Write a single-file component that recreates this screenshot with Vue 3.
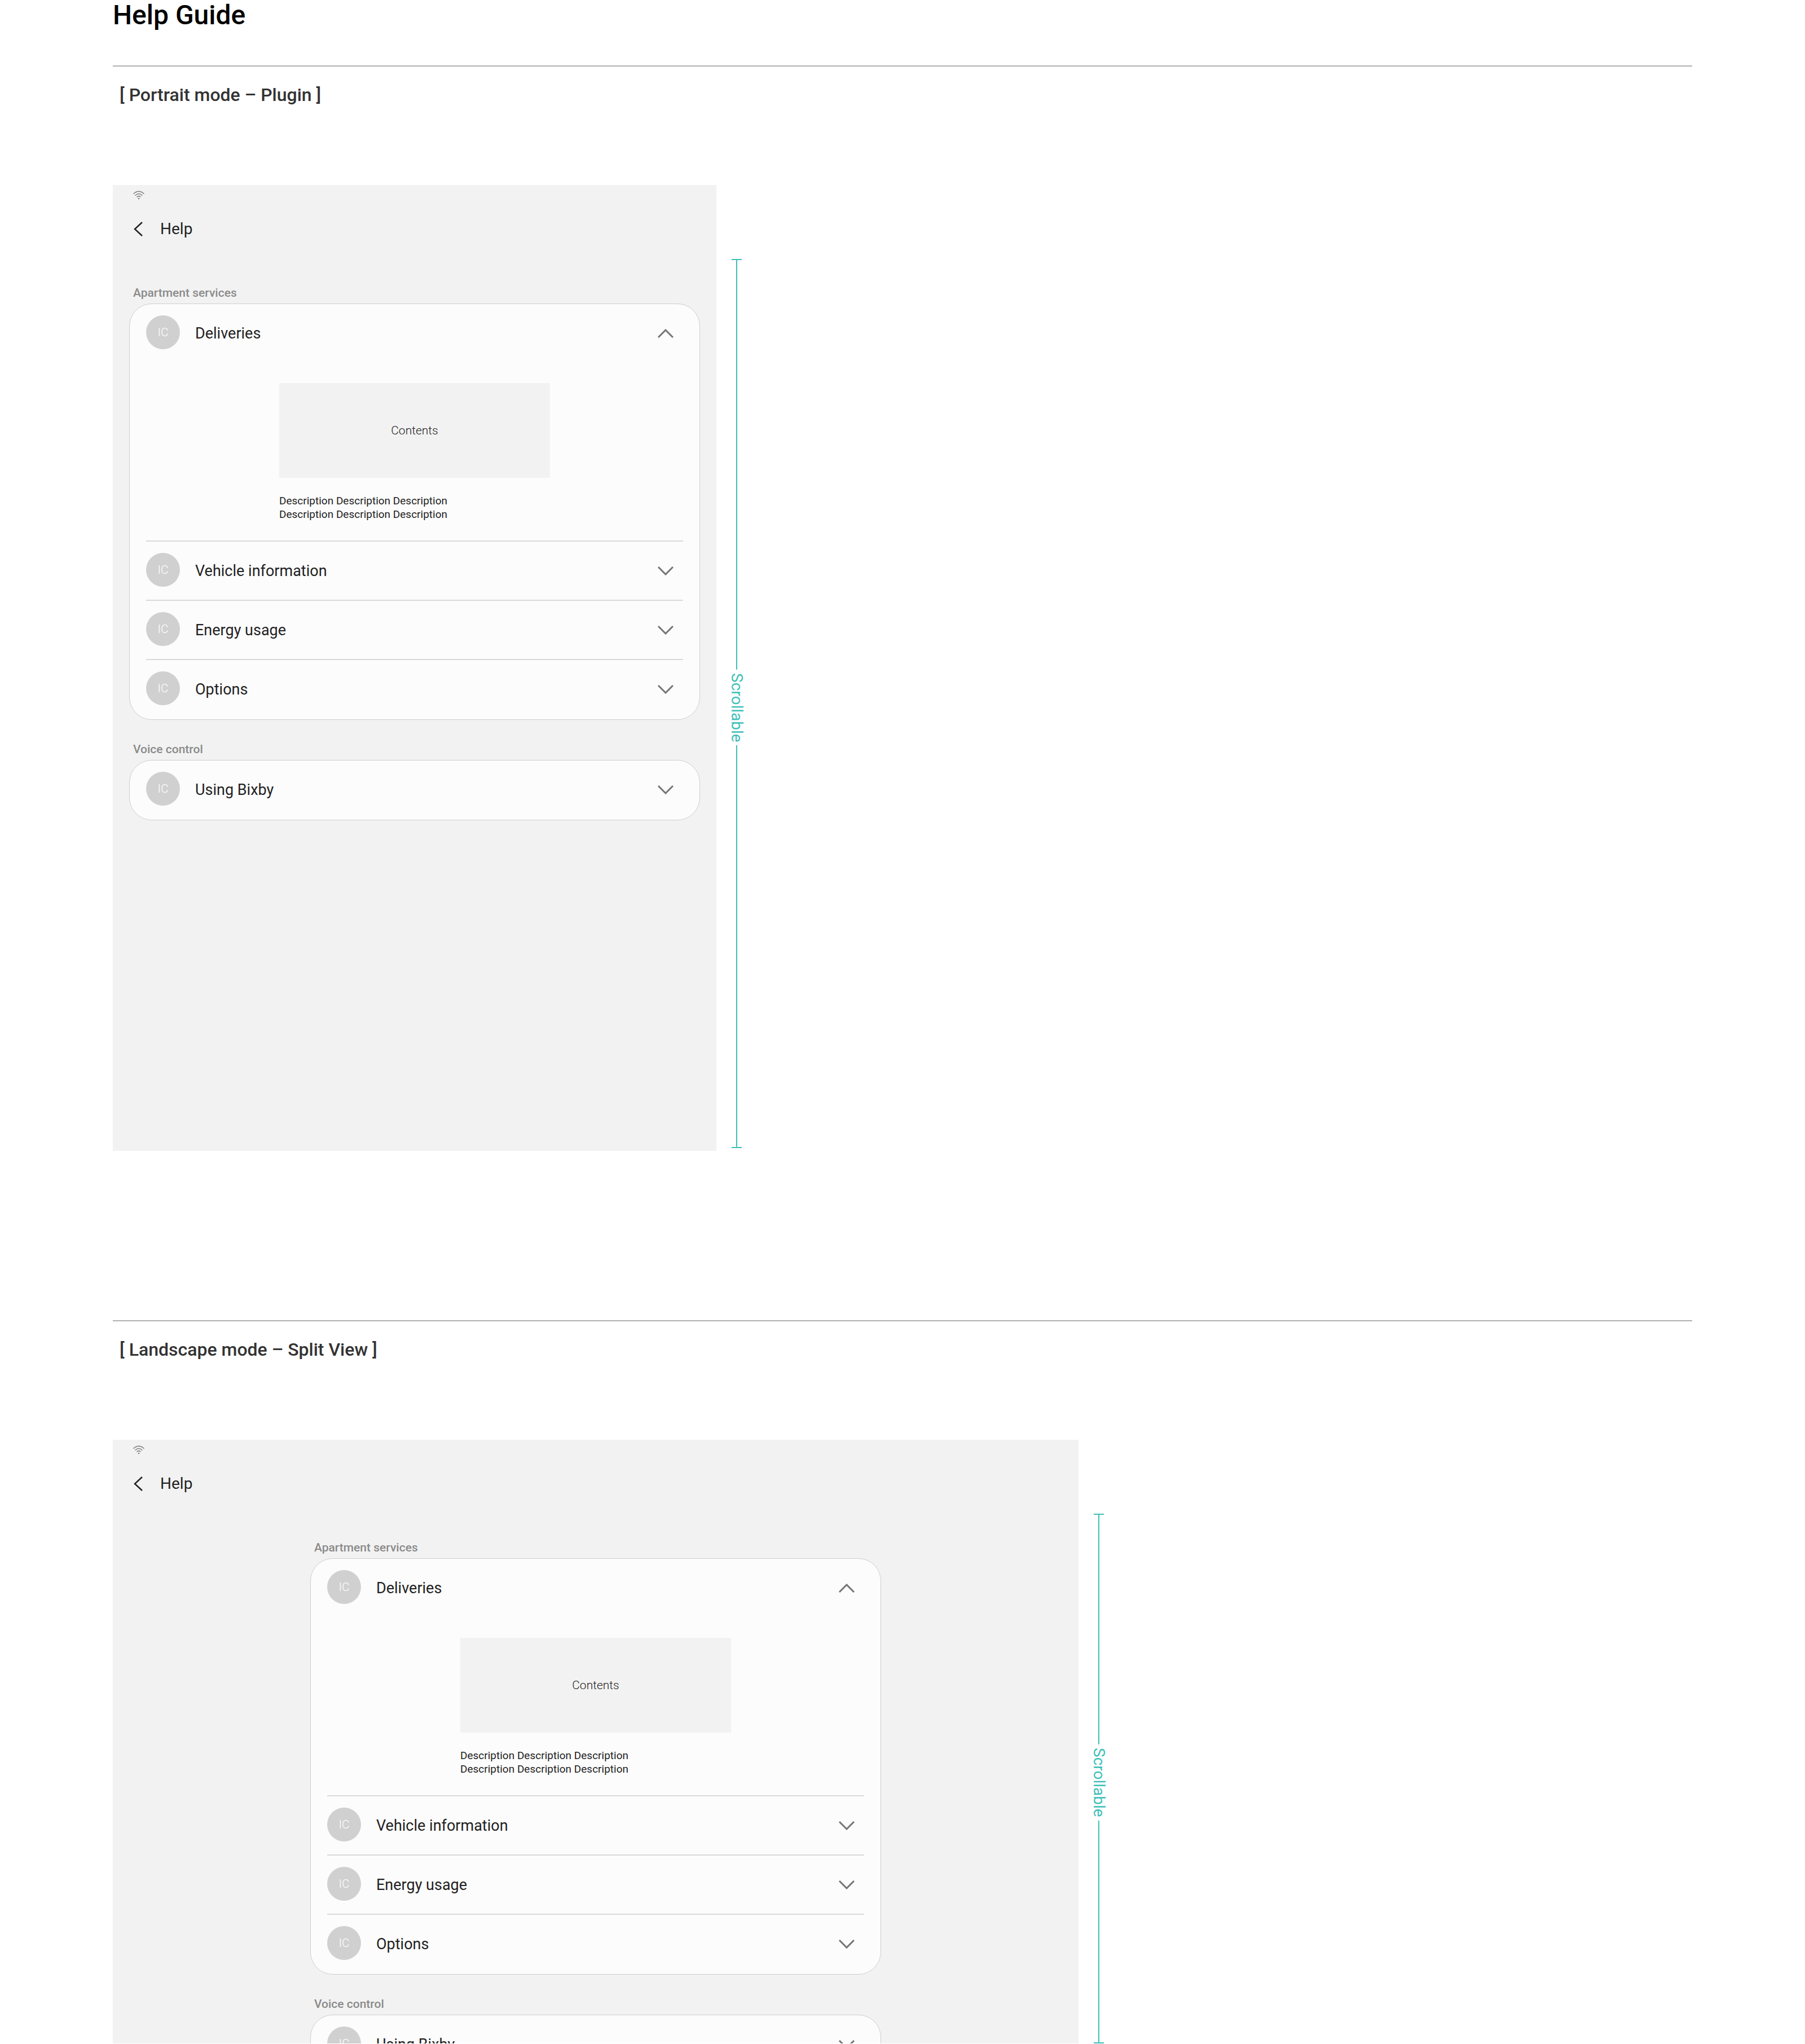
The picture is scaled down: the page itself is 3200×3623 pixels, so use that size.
<script setup>
import { reactive } from 'vue'

const makeSections = () => [
  {
    title: 'Apartment services',
    items: [
      { name: 'Deliveries', open: true },
      { name: 'Vehicle information', open: false },
      { name: 'Energy usage', open: false },
      { name: 'Options', open: false },
    ],
  },
  { title: 'Voice control', items: [{ name: 'Using Bixby', open: false }] },
]

const modes = reactive([
  { id: 'portrait', heading: '[ Portrait mode – Plugin ]', sections: makeSections() },
  { id: 'landscape', heading: '[ Landscape mode – Split View ]', sections: makeSections() },
])
</script>

<template>
  <main class="page">
    <h1 class="page-title">Help Guide</h1>

    <section v-for="mode in modes" :key="mode.id" class="mode" :class="mode.id">
      <h2 class="mode-title">{{ mode.heading }}</h2>

      <div class="stage">
        <div class="screen">
          <div class="status">
            <svg class="wifi" viewBox="0 0 20 16" aria-hidden="true">
              <g fill="none" stroke="#7c7c7c" stroke-width="1.5" stroke-linecap="round">
                <path d="M1 5.2Q10-2.8 19 5.2" />
                <path d="M4 8.2Q10 2.8 16 8.2" />
                <path d="M6.900 11Q10 8.2 13.100 11" />
              </g>
              <circle cx="10" cy="14" r="1.3" fill="#7c7c7c" />
            </svg>
          </div>

          <header class="app-bar">
            <button class="back" type="button" aria-label="Back">
              <svg viewBox="0 0 16 26" aria-hidden="true">
                <path d="M15 1 2 13 15 25" fill="none" stroke="#222" stroke-width="2.500" />
              </svg>
            </button>
            <span class="app-title">Help</span>
          </header>

          <div class="sections">
            <div v-for="section in mode.sections" :key="section.title" class="section">
              <h3 class="section-title">{{ section.title }}</h3>
              <ul class="card">
                <li v-for="item in section.items" :key="item.name" class="item">
                  <button
                    class="row"
                    type="button"
                    :aria-expanded="item.open"
                    @click="item.open = !item.open"
                  >
                    <span class="badge" aria-hidden="true">IC</span>
                    <span class="row-name">{{ item.name }}</span>
                    <svg class="chevron" :class="{ up: item.open }" viewBox="0 0 28 16" aria-hidden="true">
                      <path d="M1 1 14 14 27 1" fill="none" stroke="#757575" stroke-width="3" />
                    </svg>
                  </button>
                  <div v-if="item.open" class="detail">
                    <div class="contents">Contents</div>
                    <p class="description">
                      Description Description Description<br />
                      Description Description Description
                    </p>
                  </div>
                </li>
              </ul>
            </div>
          </div>
        </div>

        <div class="ruler">
          <span class="line line-top"></span>
          <span class="ruler-label">Scrollable</span>
          <span class="line line-bottom"></span>
        </div>
      </div>
    </section>
  </main>
</template>

<style>
body {
  margin: 0;
  background: #fff;
}
</style>

<style scoped>
.page {
  padding: 0 200px;
  overflow: hidden;
  font-family: Roboto, 'Noto Sans', sans-serif;
  color: #222;
}

h1,
h2,
h3,
p,
ul {
  margin: 0;
  padding: 0;
}

h1,
h2,
h3 {
  font-weight: 500;
}

button {
  padding: 0;
  border: 0;
  background: none;
  color: inherit;
  font: inherit;
  cursor: pointer;
}

svg {
  display: block;
}

.page-title {
  height: 116px;
  font-size: 48px;
  line-height: 54px;
  color: #000;
}

.mode {
  border-top: 2px solid #b0b0b0;
}

.portrait {
  padding-bottom: 300px;
}

.mode-title {
  padding: 30px 12px 140px;
  font-size: 32px;
  line-height: 40px;
  color: #333;
}

.stage {
  display: flex;
  gap: 27px;
}

.screen {
  box-sizing: border-box;
  width: 100%;
  overflow: hidden;
  background: #f2f2f2;
}

.portrait .screen {
  max-width: 1070px;
  aspect-ratio: 1070 / 1712;
}

.landscape .screen {
  max-width: 1712px;
  aspect-ratio: 1712 / 1070;
}

.status {
  padding: 10px 36px 0;
}

.wifi {
  width: 20px;
  height: 16px;
}

.app-bar {
  display: flex;
  align-items: center;
  gap: 31px;
  padding: 32px 37px 0;
}

.back svg {
  width: 16px;
  height: 26px;
}

.app-title {
  font-size: 28px;
  line-height: 40px;
}

.sections {
  max-width: 1012px;
  margin: 0 auto;
  padding-top: 67px;
}

.section-title {
  padding: 12px 7px 5px;
  font-size: 21px;
  line-height: 28px;
  color: #8a8a8a;
}

.section + .section {
  padding-top: 26px;
}

.card {
  list-style: none;
  padding: 0 29px 2px;
  border: 1px solid #cfcfcf;
  border-radius: 40px;
  background: #fcfcfc;
}

.item + .item {
  border-top: 2px solid #d9d9d9;
}

.row {
  display: flex;
  align-items: center;
  width: 100%;
  height: 103px;
  text-align: left;
}

.badge {
  width: 60px;
  margin: 0 27px 3px 0;
  border-radius: 50%;
  background: #d0d0d0;
  font-size: 21px;
  font-weight: 300;
  line-height: 60px;
  text-align: center;
  color: #fff;
}

.row-name {
  flex: 1;
  font-size: 27px;
  line-height: 40px;
}

.chevron {
  width: 28px;
  height: 16px;
  margin-right: 17px;
}

.chevron.up {
  transform: rotate(180deg);
}

.detail {
  max-width: 480px;
  margin: 0 auto;
  padding: 37px 0 34px;
}

.contents {
  background: #f2f2f2;
  font-size: 21px;
  font-weight: 300;
  line-height: 168px;
  text-align: center;
}

.description {
  padding-top: 29px;
  font-size: 19px;
  line-height: 24px;
  white-space: nowrap;
}

.ruler {
  display: flex;
  flex: none;
  flex-direction: column;
  align-items: center;
  width: 18px;
  padding-top: 131px;
  color: #3dc0b8;
}

.portrait .ruler {
  padding-bottom: 5px;
}

.line {
  box-sizing: border-box;
  width: 18px;
  background: linear-gradient(currentColor, currentColor) center / 2px 100% no-repeat;
}

.line-top {
  flex: 1 1 16px;
  border-top: 2px solid;
}

.line-bottom {
  flex: 1 1 0;
  border-bottom: 2px solid;
}

.ruler-label {
  padding: 6px 0;
  font-size: 28px;
  line-height: 28px;
  writing-mode: vertical-rl;
}
</style>
